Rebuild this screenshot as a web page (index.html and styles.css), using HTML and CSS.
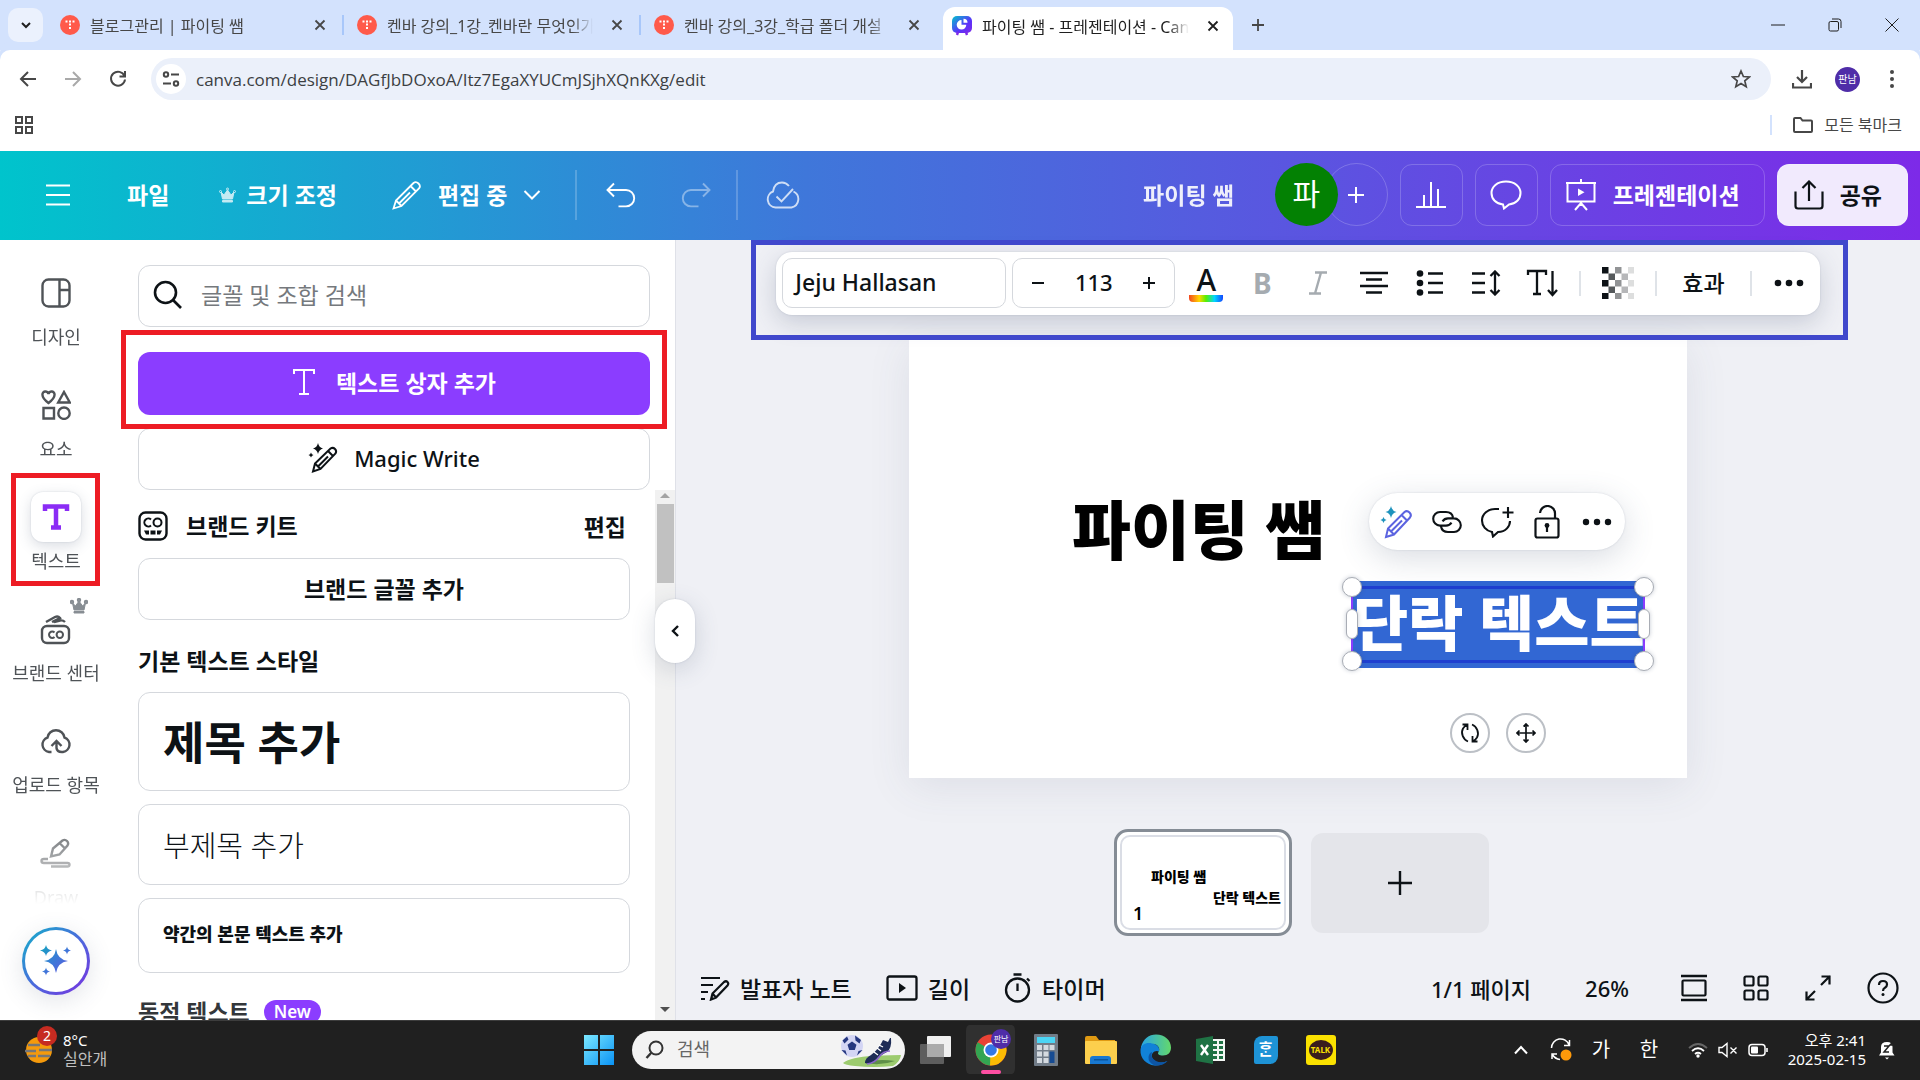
FILE: index.html
```html
<!DOCTYPE html>
<html lang="ko">
<head>
    <meta charset="UTF-8">
    <meta name="viewport" content="width=device-width, initial-scale=1.0">
    <title>파이팅 쌤 - 프레젠테이션 - Canva</title>
    <link rel="stylesheet" href="styles.css">
</head>
<body>
    <!-- Browser tabs -->
    <div class="tab-strip">
        <button class="tab-search" aria-label="탭 검색">
            <svg width="12" height="12" viewBox="0 0 12 12"><path d="M2 4l4 4 4-4" stroke-width="2"/></svg>
        </button>
        <div class="tab">
            <svg class="favicon" viewBox="0 0 20 20"><circle cx="10" cy="10" r="10" fill="#ff5a4a" stroke="none"/><path d="M5.500 6.500h2M9 6.500h2M12.500 6.500h2M9 9.500h2M9 13h2" stroke="#fff" stroke-width="1.800"/></svg>
            <span class="tab-title">블로그관리 | 파이팅 쌤</span>
            <button class="tab-close" aria-label="닫기"><svg width="12" height="12" viewBox="0 0 12 12"><path d="M1.500 1.500l9 9M10.500 1.500l-9 9" stroke-width="1.800"/></svg></button>
        </div>
        <div class="tab">
            <svg class="favicon" viewBox="0 0 20 20"><circle cx="10" cy="10" r="10" fill="#ff5a4a" stroke="none"/><path d="M5.500 6.500h2M9 6.500h2M12.500 6.500h2M9 9.500h2M9 13h2" stroke="#fff" stroke-width="1.800"/></svg>
            <span class="tab-title">켄바 강의_1강_켄바란 무엇인가</span>
            <button class="tab-close" aria-label="닫기"><svg width="12" height="12" viewBox="0 0 12 12"><path d="M1.500 1.500l9 9M10.500 1.500l-9 9" stroke-width="1.800"/></svg></button>
        </div>
        <div class="tab last">
            <svg class="favicon" viewBox="0 0 20 20"><circle cx="10" cy="10" r="10" fill="#ff5a4a" stroke="none"/><path d="M5.500 6.500h2M9 6.500h2M12.500 6.500h2M9 9.500h2M9 13h2" stroke="#fff" stroke-width="1.800"/></svg>
            <span class="tab-title">켄바 강의_3강_학급 폴더 개설</span>
            <button class="tab-close" aria-label="닫기"><svg width="12" height="12" viewBox="0 0 12 12"><path d="M1.500 1.500l9 9M10.500 1.500l-9 9" stroke-width="1.800"/></svg></button>
        </div>
        <div class="tab active">
            <svg class="favicon" viewBox="0 0 20 20">
                <defs><linearGradient id="fav" x1="0" y1="0" x2="1" y2="1"><stop offset="0" stop-color="#00c4cc"/><stop offset=".6" stop-color="#5a32fa"/><stop offset="1" stop-color="#7d2ae8"/></linearGradient></defs>
                <rect width="20" height="17" rx="5" fill="url(#fav)" stroke="none"/><path d="M6 16l-1 3M14 16l1 3" stroke="#7d2ae8" stroke-width="2.400"/>
                <path d="M9.500 4a4.800 4.800 0 1 0 4.800 4.800H9.500z" fill="#fff" stroke="none"/><path d="M11.500 2.800v4h4a4 4 0 0 0-4-4z" fill="#fff" stroke="none"/>
            </svg>
            <span class="tab-title">파이팅 쌤 - 프레젠테이션 - Canva</span>
            <button class="tab-close" aria-label="닫기"><svg width="12" height="12" viewBox="0 0 12 12"><path d="M1.500 1.500l9 9M10.500 1.500l-9 9" stroke-width="1.800"/></svg></button>
        </div>
        <button class="new-tab" aria-label="새 탭"><svg width="14" height="14" viewBox="0 0 14 14"><path d="M7 1v12M1 7h12" stroke-width="1.800"/></svg></button>
        <div class="window-controls">
            <button aria-label="최소화"><svg width="14" height="14" viewBox="0 0 14 14"><path d="M0 7h14"/></svg></button>
            <button aria-label="복원"><svg width="14" height="14" viewBox="0 0 14 14"><rect x="1" y="3.500" width="9.500" height="9.500" rx="1.500"/><path d="M4 1h6.500a2.500 2.500 0 0 1 2.500 2.500V10"/></svg></button>
            <button aria-label="닫기"><svg width="14" height="14" viewBox="0 0 14 14"><path d="M.5.500l13 13M13.500.500l-13 13"/></svg></button>
        </div>
    </div>

    <!-- Address bar -->
    <div class="browser-bar">
        <button aria-label="뒤로"><svg width="18" height="18" viewBox="0 0 18 18"><path d="M17 9H2M9 2L2 9l7 7" stroke-width="2"/></svg></button>
        <button class="dim" aria-label="앞으로"><svg width="18" height="18" viewBox="0 0 18 18"><path d="M1 9h15M9 2l7 7-7 7" stroke-width="2"/></svg></button>
        <button aria-label="새로고침"><svg width="18" height="18" viewBox="0 0 18 18"><path d="M15.500 6A7 7 0 1 0 16 9.500M16 1v5.500h-5.500" stroke-width="2"/></svg></button>
        <div class="omnibox">
            <span class="site-info"><svg width="18" height="18" viewBox="0 0 18 18"><path d="M9 4.500h8M1 13.500h8" stroke-width="2"/><circle cx="4" cy="4.500" r="2.200" stroke-width="2"/><circle cx="14" cy="13.500" r="2.200" stroke-width="2"/></svg></span>
            <input type="text" aria-label="주소" value="canva.com/design/DAGfJbDOxoA/Itz7EgaXYUCmJSjhXQnKXg/edit">
            <svg width="20" height="20" viewBox="0 0 20 20"><path d="M10 2l2.400 5.500 6 .5-4.600 3.900 1.400 5.900L10 14.600l-5.200 3.200 1.400-5.900L1.600 8l6-.5z" stroke-width="1.700"/></svg>
        </div>
        <button aria-label="다운로드"><svg width="20" height="20" viewBox="0 0 20 20"><path d="M10 1v11M5 8l5 5 5-5M1 14v4.500h18V14" stroke-width="2.200"/></svg></button>
        <span class="profile">판남</span>
        <button aria-label="메뉴"><svg width="6" height="20" viewBox="0 0 6 20"><g fill="currentColor" stroke="none"><circle cx="3" cy="3" r="2"/><circle cx="3" cy="10" r="2"/><circle cx="3" cy="17" r="2"/></g></svg></button>
    </div>
    <div class="bookmarks">
        <button aria-label="앱"><svg width="18" height="18" viewBox="0 0 18 18"><path d="M1 1h6v6H1zM11 1h6v6h-6zM1 11h6v6H1zM11 11h6v6h-6z" stroke-width="2"/></svg></button>
        <a class="all-bookmarks" href="#"><svg width="22" height="18" viewBox="0 0 22 18"><path d="M3 2h5.500l2 2.500H19q1 0 1 1V15q0 1-1 1H3q-1 0-1-1V3q0-1 1-1z" stroke-width="2"/></svg>모든 북마크</a>
    </div>

    <!-- Editor header -->
    <header class="app-header">
        <div class="header-left">
            <button class="menu-btn" aria-label="메뉴"><svg width="26" height="22" viewBox="0 0 26 22"><path d="M1 1.500h24M1 11h24M1 20.500h24" stroke-width="2"/></svg></button>
            <button>파일</button>
            <button><svg class="crown" width="17" height="16" viewBox="0 0 17 16"><path d="M2 5l3 3 3.500-5L12 8l3-3-1.500 7h-10zM3.500 13.500h10v1.500h-10z" fill="currentColor"/><circle cx="1.500" cy="4.500" r="1" /><circle cx="8.500" cy="2" r="1"/><circle cx="15.500" cy="4.500" r="1"/></svg>크기 조정</button>
            <button class="edit-mode"><svg width="30" height="30" viewBox="0 0 30 30"><path d="M1.500 28.500L4 20.500 21.500 3q2.500-2 5 .5t.5 5L9.500 26zM4 20.500l5.500 5.500M18.500 6l5.500 5.500M7 23.500L18 12.500" stroke-width="1.800"/></svg>편집 중<svg width="18" height="12" viewBox="0 0 18 12"><path d="M1.500 2L9 9.500 16.500 2" stroke-width="2"/></svg></button>
            <span class="header-line"></span>
            <button aria-label="실행 취소"><svg width="30" height="26" viewBox="0 0 30 26"><path d="M8 1.500L1.500 8 8 14.500M1.500 8H20a8.200 8.200 0 0 1 0 16.400h-7.500" stroke-width="1.900"/></svg></button>
            <button class="faded" aria-label="다시 실행"><svg width="30" height="26" viewBox="0 0 30 26"><path d="M22 1.500L28.500 8 22 14.500M28.500 8H10a8.200 8.200 0 0 0 0 16.400h7.500" stroke-width="1.900"/></svg></button>
            <span class="header-line"></span>
            <svg class="saved" width="34" height="28" viewBox="0 0 34 28"><path d="M27.500 10.500a8.500 8.500 0 0 1-2 16h-16a8.300 8.300 0 0 1-2.500-16C8 4 12 1.500 16 1.500q4 0 7 3.500M10.500 15.500l5 5L27 8" stroke-width="1.900"/></svg>
        </div>
        <div class="header-right">
            <span class="doc-title">파이팅 쌤</span>
            <div class="members">
                <span class="avatar">파</span>
                <button class="add-member" aria-label="멤버 추가"><svg width="18" height="18" viewBox="0 0 18 18"><path d="M9 1v16M1 9h16" stroke-width="2"/></svg></button>
            </div>
            <button class="outlined square" aria-label="통계"><svg width="32" height="28" viewBox="0 0 32 28"><path d="M1 26h30M9 26V14M16 26V1M23 26V8" stroke-width="2"/></svg></button>
            <button class="outlined square" aria-label="댓글"><svg width="32" height="30" viewBox="0 0 32 30"><path d="M13 24.500C6 24 1.500 19 1.500 13S7 1.500 16 1.500 30.500 7 30.500 13 26 24 19 24.500L14 28.500z" stroke-width="2"/></svg></button>
            <button class="outlined"><svg width="32" height="32" viewBox="0 0 32 32"><path d="M1 4h30M2.500 4v18.500h27V4M16 0v4M16 22.500V27M10 31l6-7 6 7" stroke-width="2"/><path d="M13 9.500v7.500l6.500-3.800z" fill="currentColor" stroke="none"/></svg>프레젠테이션</button>
            <button class="share"><svg width="30" height="30" viewBox="0 0 30 30"><path d="M1.500 11.500v14.500q0 2.500 2.500 2.500h22q2.500 0 2.500-2.500V11.500M15 21V2M8.500 8L15 1.500 21.500 8" stroke-width="2.200"/></svg>공유</button>
        </div>
    </header>

    <main class="workspace">
        <!-- Side rail -->
        <nav class="rail">
            <div class="rail-list">
                <a class="rail-item" href="#"><span class="tile"><svg width="30" height="30" viewBox="0 0 30 30"><rect x="1.500" y="1.500" width="27" height="27" rx="6"/><path d="M18.500 1.500v27M18.500 12h10"/></svg></span>디자인</a>
                <a class="rail-item" href="#"><span class="tile"><svg width="30" height="30" viewBox="0 0 30 30"><path d="M7.500 13C3 9.500 1.500 7.500 1.500 5a3 3 0 0 1 6-1 3 3 0 0 1 6 1c0 2.500-1.500 4.500-6 8zM23 2l5.800 10.500H17.200zM2.500 18h10.500v10.500H2.500z"/><circle cx="23" cy="23.200" r="5.700"/></svg></span>요소</a>
                <a class="rail-item current" href="#"><span class="tile"><svg width="28" height="28" viewBox="0 0 28 28"><path d="M3 8V3.500h22V8M14 3.500V24M9 24.500h10" stroke-width="4.500"/></svg></span>텍스트</a>
                <a class="rail-item" href="#"><span class="tile"><svg width="32" height="32" viewBox="0 0 32 32"><rect x="2" y="13" width="27" height="17" rx="5"/><path d="M6 9l9-5q3-1.500 5 1l-8 4M14 9l6-1.500q3-.5 5 1.500"/><path d="M14.500 19.500a3.200 3.200 0 1 0 0 4.500" stroke-width="2"/><circle cx="19.800" cy="21.700" r="3.200" stroke-width="2"/></svg><svg class="rail-crown" width="18" height="16" viewBox="0 0 17 16"><path d="M2 5l3 3 3.500-5L12 8l3-3-1.500 7h-10zM3.500 13.500h10v1.500h-10z" fill="currentColor" stroke-width="1"/><circle cx="1.500" cy="4" r="1"/><circle cx="8.500" cy="2" r="1"/><circle cx="15.500" cy="4" r="1"/></svg></span>브랜드 센터</a>
                <a class="rail-item" href="#"><span class="tile"><svg width="32" height="28" viewBox="0 0 32 28"><path d="M11.500 25H9A7.500 7.500 0 0 1 7.500 10.500a8.600 8.600 0 0 1 17 0A7.500 7.500 0 0 1 23 25q-6 .5-6.500-4v-7M11.500 19l5-5 5 5"/></svg></span>업로드 항목</a>
                <a class="rail-item" href="#"><span class="tile"><svg width="32" height="30" viewBox="0 0 32 30"><path d="M11 18.500l2-8 9.500-8q2.500-1.500 4.500.5t.5 4.500L19.500 16.500zM19.500 5l5 5M8 21H4q-2.500 0-2.500 2t2.500 2h23.500q2 0 2 1.800T27.500 28.500H11"/></svg></span>Draw</a>
            </div>
            <button class="magic" aria-label="매직 스튜디오">
                <svg width="34" height="34" viewBox="0 0 34 34">
                    <defs><linearGradient id="mg" x1="0" y1="0" x2="1" y2="1"><stop offset="0" stop-color="#12a5bf"/><stop offset=".5" stop-color="#3d78d8"/><stop offset="1" stop-color="#6b4ee0"/></linearGradient></defs>
                    <path d="M17 5q1.500 10.500 12 12-10.500 1.500-12 12-1.500-10.500-12-12 10.500-1.500 12-12zM7 1q.8 4.500 6 5.500-5.200 1-6 5.500-.8-4.500-6-5.500 5.200-1 6-5.500zM28 2.500q.5 3.500 4 4-3.500.5-4 4-.5-3.500-4-4 3.500-.5 4-4zM7 23.500q.5 3.500 4 4-3.500.5-4 4-.5-3.500-4-4 3.500-.5 4-4z" fill="url(#mg)" stroke="none"/>
                </svg>
            </button>
        </nav>

        <!-- Text panel -->
        <section class="panel">
            <div class="panel-top">
                <label class="search-box">
                    <svg width="30" height="30" viewBox="0 0 30 30"><circle cx="12.500" cy="12.500" r="10.500" stroke-width="2.600"/><path d="M20 20l8 8" stroke-width="2.600"/></svg>
                    <input type="search" placeholder="글꼴 및 조합 검색" aria-label="글꼴 및 조합 검색">
                </label>
                <button class="add-text"><svg width="24" height="28" viewBox="0 0 24 28"><path d="M2 6V2h20v4M12 2v24M7 26h10" stroke-width="2"/></svg>텍스트 상자 추가</button>
                <button class="box-btn magic-write"><svg width="32" height="32" viewBox="0 0 32 32"><path d="M5 29.500l2-8 15.500-15q2.500-1.500 4.500.5t.5 4.500L12.500 27zM7 21.500l5.500 5.500M20 9l5.500 5.500M10 24.500l10-10" stroke-width="2"/><path d="M10 1q1 4.500 5 5.500-4 1-5 5.500-1-4.500-5-5.500 4-1 5-5.500zM3 10.500q.5 2 2.500 2.500-2 .5-2.500 2.500Q2.500 13.500.5 13q2-.5 2.500-2.500z" fill="currentColor" stroke="none"/></svg>Magic Write</button>
            </div>
            <div class="panel-scroll">
                <div class="panel-content">
                    <div class="brand-row">
                        <svg width="30" height="30" viewBox="0 0 30 30"><rect x="1.500" y="1.500" width="27" height="27" rx="6" stroke-width="2.400"/><path d="M13 8.500a4 4 0 1 0 0 6" stroke-width="2"/><circle cx="19.500" cy="11.500" r="4" stroke-width="2"/><path d="M6 19.500h5v4H8zM12.500 19.500h5v4h-5zM19 19.500h5l-2 4h-3z" fill="currentColor" stroke="none"/></svg>
                        <h2>브랜드 키트</h2>
                        <a href="#">편집</a>
                    </div>
                    <button class="box-btn brand-font">브랜드 글꼴 추가</button>
                    <h2 class="style-title">기본 텍스트 스타일</h2>
                    <button class="style-card heading">제목 추가</button>
                    <button class="style-card subheading">부제목 추가</button>
                    <button class="style-card body-text">약간의 본문 텍스트 추가</button>
                    <h2 class="dynamic">동적 텍스트 <span class="new">New</span></h2>
                </div>
                <div class="scrollbar"><span class="arrow-up"></span><span class="thumb"></span><span class="arrow-down"></span></div>
            </div>
            <button class="collapse" aria-label="패널 닫기"><svg width="10" height="14" viewBox="0 0 10 14"><path d="M8 2L3 7l5 5" stroke-width="2.400"/></svg></button>
        </section>

        <!-- Canvas -->
        <section class="editor">
            <div class="toolbar">
                <button class="font-name">Jeju Hallasan</button>
                <div class="font-size">
                    <button aria-label="작게"><svg width="14" height="14" viewBox="0 0 14 14"><path d="M1 7h12" stroke-width="2"/></svg></button>
                    <input type="text" value="113" aria-label="글꼴 크기">
                    <button aria-label="크게"><svg width="14" height="14" viewBox="0 0 14 14"><path d="M7 1v12M1 7h12" stroke-width="2"/></svg></button>
                </div>
                <button class="tool" aria-label="색상"><span class="color-a">A</span></button>
                <button class="tool off" aria-label="굵게"><b>B</b></button>
                <button class="tool off" aria-label="기울임"><svg width="20" height="24" viewBox="0 0 20 24"><path d="M7 1.500h12M1 22.500h12M13 1.500L7 22.500" stroke-width="2.400"/></svg></button>
                <button class="tool" aria-label="정렬"><svg width="30" height="24" viewBox="0 0 30 24"><path d="M1 2h28M7 8.500h16M1 15h28M7 21.500h16" stroke-width="2.400"/></svg></button>
                <button class="tool" aria-label="목록"><svg width="28" height="26" viewBox="0 0 28 26"><path d="M12 3.500h15M12 13h15M12 22.500h15" stroke-width="2.400"/><g fill="currentColor" stroke="none"><circle cx="4" cy="3.500" r="3.300"/><circle cx="4" cy="13" r="3.300"/><circle cx="4" cy="22.500" r="3.300"/></g></svg></button>
                <button class="tool" aria-label="간격"><svg width="30" height="26" viewBox="0 0 30 26"><path d="M1 3.500h13M1 13h13M1 22.500h13M24 1.500v23M19.500 6L24 1.500 28.500 6M19.500 20l4.500 4.500 4.500-4.500" stroke-width="2.300"/></svg></button>
                <button class="tool" aria-label="세로 텍스트"><svg width="32" height="28" viewBox="0 0 32 28"><path d="M2 6V2h18v4M11 2v23M7 25h8M26.500 2v23.500M22 21l4.500 5 4.500-5" stroke-width="2.300"/></svg></button>
                <span class="tool-line"></span>
                <button class="tool" aria-label="투명도"><svg width="32" height="32" viewBox="0 0 32 32"><g fill="#0d1216" stroke="none"><path d="M0 0h6.500v6.500H0zM0 13h6.500v6.500H0zM0 26h6.500v6H0z"/><path d="M6.500 6.500H13V13H6.500zM6.500 19.500H13V26H6.500z" opacity=".7"/><path d="M13 0h6.500v6.500H13zM13 13h6.500v6.500H13zM13 26h6.500v6H13z" opacity=".45"/><path d="M19.500 6.500H26V13h-6.500zM19.500 19.500H26V26h-6.500z" opacity=".3"/><path d="M26 0h6v6.500h-6zM26 13h6v6.500h-6zM26 26h6v6h-6z" opacity=".14"/></g></svg></button>
                <span class="tool-line"></span>
                <button class="effects">효과</button>
                <span class="tool-line"></span>
                <button class="tool" aria-label="더 보기"><svg width="30" height="8" viewBox="0 0 30 8"><g fill="currentColor" stroke="none"><circle cx="4" cy="4" r="3.300"/><circle cx="15" cy="4" r="3.300"/><circle cx="26" cy="4" r="3.300"/></g></svg></button>
            </div>

            <div class="slide">
                <div class="slide-text title-text">파이팅 쌤</div>
                <div class="slide-text selected-text">단락 텍스트
                    <i class="knob tl"></i><i class="knob tr"></i><i class="knob bl"></i><i class="knob br"></i>
                    <i class="grip left"></i><i class="grip right"></i>
                </div>
                <div class="context-bar">
                    <button aria-label="매직"><svg width="34" height="34" viewBox="0 0 34 34"><path d="M6 32l2-8.500L24.500 7q2.500-2 5 .5t.5 5L14 29.500zM8 23.500l6 6M21.500 10l6 6M11 26.500l11-11" stroke="#5b63e0" stroke-width="2"/><path d="M11 1q1 5 5.500 6-4.500 1-5.500 6-1-5-5.500-6 4.500-1 5.500-6zM3.500 12q.5 2.500 3 3-2.500.5-3 3Q3 15.500.5 15q2.500-.5 3-3z" fill="#1e93bd" stroke="none"/></svg></button>
                    <button aria-label="링크"><svg width="32" height="24" viewBox="0 0 32 24"><path d="M22 7.500Q21 2 15 2H9A6.800 6.800 0 0 0 9 15.600h6q3.500 0 5.500-3M10 16.500Q11 22 17 22h6a6.800 6.800 0 0 0 0-13.600h-6q-3.500 0-5.500 3" stroke-width="2.100"/></svg></button>
                    <button aria-label="댓글"><svg width="34" height="32" viewBox="0 0 34 32"><path d="M19 3h-4C8 3 2 8 2 14.500 2 20 6 25 12 26l1 4.500 5-4.500c8 0 12-6 12-11M28 1v11M22.500 6.500h11" stroke-width="2.100"/></svg></button>
                    <button aria-label="잠금"><svg width="26" height="34" viewBox="0 0 26 34"><rect x="1.500" y="13.500" width="23" height="19" rx="2" stroke-width="2.200"/><path d="M6 8a7.500 7.500 0 0 1 15 1v4.500M13 22v5" stroke-width="2.200"/><circle cx="13" cy="20.500" r="2.400" fill="currentColor" stroke="none"/></svg></button>
                    <button aria-label="더 보기"><svg width="30" height="8" viewBox="0 0 30 8"><g fill="currentColor" stroke="none"><circle cx="4" cy="4" r="3.200"/><circle cx="15" cy="4" r="3.200"/><circle cx="26" cy="4" r="3.200"/></g></svg></button>
                </div>
                <div class="transform-btns">
                    <button aria-label="회전"><svg width="20" height="20" viewBox="0 0 20 20"><path d="M8 18.500C3 16.500.5 10 3 5.500Q4.500 3 7 2M2.500 1.500H7.500V7M12 1.500C17 3.500 19.500 10 17 14.500q-1.500 2.500-4 3.500M17.500 18.500H12.500V13" stroke-width="1.800"/></svg></button>
                    <button aria-label="이동"><svg width="20" height="20" viewBox="0 0 20 20"><path d="M10 1v18M1 10h18M7.500 3.500L10 1l2.500 2.500M7.500 16.500L10 19l2.500-2.500M3.500 7.500L1 10l2.500 2.500M16.500 7.500L19 10l-2.500 2.500" stroke-width="1.700"/></svg></button>
                </div>
            </div>

            <div class="pages">
                <button class="page-thumb">
                    <span class="mini first">파이팅 쌤</span>
                    <span class="mini second">단락 텍스트</span>
                    <span class="page-no">1</span>
                </button>
                <button class="add-page" aria-label="페이지 추가"><svg width="24" height="24" viewBox="0 0 24 24"><path d="M12 0v24M0 12h24" stroke-width="2.400"/></svg></button>
            </div>

            <footer class="editor-footer">
                <button><svg width="30" height="26" viewBox="0 0 30 26"><path d="M1 3h19M1 10h12M1 17h7M1 24h4M11 24.500l1.500-6L24 7q2-1.500 3.500 0t0 3.500L16 22.500zM12.500 18.500l3.500 4" stroke-width="2.200"/></svg>발표자 노트</button>
                <button><svg width="32" height="26" viewBox="0 0 32 26"><rect x="1.500" y="1.500" width="29" height="23" rx="2" stroke-width="2.300"/><path d="M13 8v10l7-5z" fill="currentColor" stroke="none"/></svg>길이</button>
                <button><svg width="28" height="30" viewBox="0 0 28 30"><circle cx="13.500" cy="17" r="11.500" stroke-width="2.300"/><path d="M9.500 1.500h8M13.500 10.500V18M23 5.500l2.500 2.500" stroke-width="2.300"/></svg>타이머</button>
                <div class="footer-right">
                    <button class="page-count">1/1 페이지</button>
                    <button class="zoom-level">26%</button>
                    <button aria-label="보기"><svg width="26" height="28" viewBox="0 0 26 28"><path d="M0 2h26M0 26h26" stroke-width="2.400"/><rect x="1.500" y="6.500" width="23" height="15" rx="1" stroke-width="2.200"/></svg></button>
                    <button aria-label="격자"><svg width="26" height="26" viewBox="0 0 26 26"><g stroke-width="2.200"><rect x="1.500" y="1.500" width="9" height="9" rx="1.500"/><rect x="15.500" y="1.500" width="9" height="9" rx="1.500"/><rect x="1.500" y="15.500" width="9" height="9" rx="1.500"/><rect x="15.500" y="15.500" width="9" height="9" rx="1.500"/></g></svg></button>
                    <button aria-label="전체 화면"><svg width="26" height="26" viewBox="0 0 26 26"><path d="M16 10l9-9M16.500 1.500h8v8M10 16l-9 9M1.500 16.500v8h8" stroke-width="2.200"/></svg></button>
                    <button aria-label="도움말"><svg width="32" height="32" viewBox="0 0 32 32"><circle cx="16" cy="16" r="14.500" stroke-width="2.200"/><path d="M12 13q0-4 4-4t4 3.500q0 2-2 3.200-2 1.300-2 3.300" stroke-width="2.200"/><circle cx="16" cy="22.500" r="1.500" fill="currentColor" stroke="none"/></svg></button>
                </div>
            </footer>
        </section>
    </main>

    <!-- Windows taskbar -->
    <div class="taskbar">
        <div class="weather">
            <span class="weather-icon">
                <svg width="30" height="30" viewBox="0 0 30 30"><circle cx="15" cy="15" r="13" fill="#f59a0c" stroke="none"/><path d="M4 10h12M1 16h11M15 15h13M4 21h8M14 21h12" stroke="#777" stroke-width="2.600"/></svg>
                <span class="badge">2</span>
            </span>
            <div><div>8°C</div><div class="muted">실안개</div></div>
        </div>
        <div class="task-center">
            <button aria-label="시작"><svg width="30" height="30" viewBox="0 0 30 30"><defs><linearGradient id="win" x1="0" y1="0" x2="1" y2="1"><stop offset="0" stop-color="#7be8ff"/><stop offset="1" stop-color="#0a93f5"/></linearGradient></defs><path d="M0 0h14v14H0zM16 0h14v14H16zM0 16h14v14H0zM16 16h14v14H16z" fill="url(#win)" stroke="none"/></svg></button>
            <label class="task-search">
                <svg width="20" height="20" viewBox="0 0 20 20"><circle cx="11" cy="8" r="6.500" stroke-width="2"/><path d="M6.500 12.500L1.500 18" stroke-width="2.400"/></svg>
                <input type="search" placeholder="검색" aria-label="검색">
                <svg width="64" height="34" viewBox="0 0 64 34">
                    <g stroke="none">
                        <path d="M4 30q8-6 30-7 20-1 28-1-1 7-8 11-20 2-38 0-10-1-12-3z" fill="#9ccb6e"/>
                        <path d="M26 30q12-5 30-2-14 5-30 2z" fill="#5f8f48"/>
                        <circle cx="13" cy="13" r="11" fill="#d3d5f4"/>
                        <path d="M13 8.500l4.500 3.200-1.700 5.300h-5.600l-1.700-5.300zM3.500 7.500L8 3.500l1.500 3-4 4zM16 2.500l6 4.500-1.500 3.500-4-3zM2.500 17l4 .5 1.500 5zM18 22.500l1.500-4.500 4-1z" fill="#25377f"/>
                        <path d="M44 7l5 2 2-4 1 0q1 10-4 14-7 3-11 9-5 4-11 2 0-5 6-8 8-6 12-15z" fill="#1e2c56"/>
                    </g>
                    <path d="M28 31q8-1 12-7t11-6" stroke="#8a68c8" stroke-width="1.600"/>
                    <path d="M38 15l4 3M35 19l4 3M40 12l4 2" stroke="#fff" stroke-width="1.300"/>
                </svg>
            </label>
            <button class="app" aria-label="작업 보기"><svg width="32" height="30" viewBox="0 0 32 30"><g stroke="none"><rect x="7" y="1" width="24" height="21" rx="1" fill="#f0f0f0"/><rect x="0" y="9" width="24" height="20" rx="1" fill="#6a6a6a" opacity=".85"/><path d="M7 9h17v13H7z" fill="#ababab"/></g></svg></button>
            <button class="app running" aria-label="Chrome"><svg width="32" height="32" viewBox="0 0 32 32"><g stroke="none"><circle cx="16" cy="16" r="15.500" fill="#e94235"/><path d="M16 16L2.600 8.300A15.500 15.500 0 0 0 15 31.500l7-12z" fill="#33a552"/><path d="M16 16h-.5L15 31.500A15.500 15.500 0 0 0 29.500 8.500H16z" fill="#fbbc04"/><circle cx="16" cy="16" r="7.500" fill="#fff"/><circle cx="16" cy="16" r="5.800" fill="#3478e5"/></g></svg><span class="chrome-user">판남</span></button>
            <button class="app" aria-label="계산기"><svg width="24" height="32" viewBox="0 0 24 32"><g stroke="none"><rect width="24" height="32" rx="1" fill="#717c88"/><rect x="3" y="3" width="18" height="6" fill="#4bd5f5"/><path d="M3 11h5v5H3zM9.500 11h5v5h-5zM15.500 11h5v5h-5zM3 17.500h5v5H3zM9.500 17.500h5v5h-5zM3 24h5v5H3zM9.500 24h5v5h-5z" fill="#d4dae0"/><path d="M15.500 17.500h5V29h-5z" fill="#164b92"/></g></svg></button>
            <button class="app" aria-label="파일 탐색기"><svg width="32" height="28" viewBox="0 0 32 28"><g stroke="none"><path d="M0 2q0-2 2-2h9l3 4h16v10H0z" fill="#e09a13"/><rect y="5" width="32" height="23" rx="1" fill="#fccf4d"/><path d="M5 28v-5q0-3 3-3h15q3 0 3 3v5z" fill="#1878d1"/><path d="M9 23h14v1.500H9z" fill="#0b559c"/></g></svg></button>
            <button class="app" aria-label="Edge"><svg width="32" height="32" viewBox="0 0 32 32"><defs><linearGradient id="edge" x1="0" y1="0" x2="1" y2="0"><stop offset="0" stop-color="#28a5e5"/><stop offset="1" stop-color="#64d86b"/></linearGradient></defs><g stroke="none"><path d="M1 13C3 5 9 .500 16 .500c9 0 15 6 15 13 0 5-3 8-8 8-4 0-6-1.500-4.500-3.500 2-3 0-8-6-8C7 10 3 12 1 16z" fill="url(#edge)"/><path d="M.5 16C1 10 7 8 12 9.500c5 .5 8 4 7 8-4-2-9 2-6.500 7 2 4.500 9 5.500 15 2.500C24 30 19 32 14.500 31.500 6 30.500 0 24 .5 16z" fill="#1182d8"/><path d="M12 18q-2 6 4 9 5 2.500 11.500 0Q23 32 15 31.500 8 29 8.500 23q.5-4 3.500-5z" fill="#0d55a4"/></g></svg></button>
            <button class="app" aria-label="Excel"><svg width="30" height="28" viewBox="0 0 30 28"><g stroke="none"><rect x="12" y="3" width="17" height="22" fill="#f4f8f5"/><path d="M17 5h4v3h-4zM23 5h4v3h-4zM17 10h4v3h-4zM23 10h4v3h-4zM17 15h4v3h-4zM23 15h4v3h-4zM17 20h4v3h-4zM23 20h4v3h-4z" fill="#1f7244"/><path d="M0 3l17-3v28L0 25z" fill="#1f7244"/></g><path d="M5 9l7 10M12 9L5 19" stroke="#fff" stroke-width="2.400"/></svg></button>
            <button class="app" aria-label="한글"><span class="hwp">ᄒᆞᆫ</span></button>
            <button class="app" aria-label="카카오톡"><span class="kakao"><span>TALK</span></span></button>
        </div>
        <div class="tray">
            <button aria-label="숨겨진 아이콘"><svg width="14" height="10" viewBox="0 0 14 10"><path d="M1 8.500l6-6.500 6 6.500" stroke-width="2"/></svg></button>
            <button class="update" aria-label="업데이트"><svg width="22" height="24" viewBox="0 0 22 24"><path d="M1.500 10A9 9 0 0 1 19 7M19.500 2v5.500H14M2 21v-5h5M2 16q3 5 8 5.500" stroke-width="1.500"/><circle cx="16" cy="17" r="5.500" fill="#ff9a0a" stroke="none"/></svg></button>
            <span class="ime">가</span>
            <span class="ime">한</span>
            <div class="status">
                <svg width="20" height="16" viewBox="0 0 20 16"><path d="M1 6q9-8 18 0" stroke="#666" stroke-width="1.800"/><path d="M4 9q6-5.500 12 0M7 12q3-2.500 6 0" stroke-width="1.800"/><circle cx="10" cy="14" r="1.700" fill="currentColor" stroke="none"/></svg>
                <svg width="20" height="16" viewBox="0 0 20 16"><path d="M1 5.500h3l5-4v13l-5-4H1zM12.500 5.500l6 6M18.500 5.500l-6 6" stroke-width="1.400"/></svg>
                <svg width="20" height="16" viewBox="0 0 20 16"><rect x="1" y="2.500" width="16" height="11" rx="3" stroke-width="1.500"/><path d="M19 6v4" stroke-width="1.600"/><rect x="3" y="4.500" width="7" height="7" rx="1" fill="currentColor" stroke="none"/></svg>
            </div>
            <div class="clock"><div>오후 2:41</div><div>2025-02-15</div></div>
            <svg width="18" height="20" viewBox="0 0 18 20"><path d="M1 15.500l2-3V7q0-5 6-5 5.500 0 5.500 5v5.500l2 3zM7 17.500h4L9 19.500z" fill="currentColor" stroke="none"/><path d="M6 6h5l-5 6h5M12 1h4l-4 4h4" stroke="#202020" stroke-width="1.500"/></svg>
        </div>
    </div>
</body>
</html>
```
FILE: styles.css
```css
* {
    margin: 0;
    padding: 0;
    box-sizing: border-box;
}

body {
    display: flex;
    flex-direction: column;
    height: 100vh;
    overflow: hidden;
    background: #fff;
    color: #0d1216;
    font-family: 'Noto Sans', 'Noto Sans CJK KR', sans-serif;
    font-size: 23px;
}

button,
input {
    font: inherit;
    color: inherit;
    background: none;
    border: none;
    outline: none;
}

button {
    display: inline-flex;
    align-items: center;
    justify-content: center;
    white-space: nowrap;
    flex-shrink: 0;
}

a {
    color: inherit;
    text-decoration: none;
}

svg {
    fill: none;
    stroke: currentColor;
    flex-shrink: 0;
}

/* Tabs */
.tab-strip {
    display: flex;
    align-items: center;
    height: 50px;
    background: #d3e2fd;
    font-size: 16px;
    color: #474747;
}

.tab-search {
    width: 35px;
    height: 34px;
    margin: 0 4px 0 8px;
    border-radius: 10px;
    background: #ebf1fd;
    color: #1f1f1f;
}

.tab {
    position: relative;
    display: flex;
    align-items: center;
    width: 297px;
    padding: 0 18px 0 13px;
}

.tab::after {
    content: '';
    position: absolute;
    right: 0;
    width: 2px;
    height: 20px;
    background: #a8c7fa;
}

.tab.last::after,
.tab.active::after {
    display: none;
}

.tab.active {
    height: 43px;
    width: 290px;
    margin-left: 5px;
    padding: 0 14px 6px 9px;
    align-self: flex-end;
    border-radius: 12px 12px 0 0;
    background: #fff;
    color: #1f1f1f;
}

.favicon {
    width: 20px;
    height: 20px;
    margin-right: 10px;
}

.tab-title {
    flex: 1;
    overflow: hidden;
    white-space: nowrap;
    margin-right: 18px;
    mask-image: linear-gradient(to right, #000 90%, transparent);
}

.new-tab {
    width: 50px;
    height: 34px;
}

.window-controls {
    display: flex;
    margin-left: auto;
    color: #1f1f1f;
}

.window-controls button {
    width: 57px;
    height: 50px;
}

/* Address bar */
.browser-bar {
    display: flex;
    align-items: center;
    height: 58px;
    padding: 0 25px 0 19px;
    gap: 27px;
    color: #474747;
    box-shadow: 0 -8px 0 #d3e2fd;
    border-radius: 10px 10px 0 0;
    background: #fff;
}

/* keeps the active tab above the strip-coloured shadow */
.tab.active {
    z-index: 1;
}

.browser-bar .dim {
    color: #a9a9a9;
}

.omnibox {
    flex: 1;
    display: flex;
    align-items: center;
    height: 42px;
    padding: 0 20px 0 5px;
    border-radius: 21px;
    background: #ebf0fa;
    margin: 0 -6px 0 -3px;
}

.omnibox input {
    flex: 1;
    font-family: 'Open Sans', 'Noto Sans', sans-serif;
    font-size: 17px;
    color: #3c3f43;
}

.site-info {
    display: flex;
    align-items: center;
    justify-content: center;
    width: 30px;
    height: 30px;
    margin-right: 10px;
    border-radius: 50%;
    background: #fff;
}

.profile {
    width: 25px;
    height: 25px;
    margin: 0 2px 0 -4px;
    border-radius: 50%;
    background: #4f2da8;
    color: #fff;
    font-size: 10px;
    line-height: 24px;
    text-align: center;
}

.bookmarks {
    display: flex;
    align-items: center;
    justify-content: space-between;
    height: 43px;
    padding: 0 18px 9px 15px;
    color: #474747;
    font-size: 16px;
}

.all-bookmarks {
    display: flex;
    align-items: center;
    gap: 10px;
    padding-left: 20px;
    border-left: 2px solid #d3e2fd;
    line-height: 20px;
}

/* Editor header */
.app-header {
    display: flex;
    justify-content: space-between;
    align-items: center;
    height: 89px;
    padding: 0 12px 2px 20px;
    background: linear-gradient(90deg, #00c4cc, #3f77da 42%, #7d2ae8);
    color: #fff;
    font-weight: 700;
    line-height: 28px;
}

.header-left,
.header-right {
    display: flex;
    align-items: center;
}

.header-left button {
    height: 50px;
    padding: 0 25px;
    gap: 10px;
}

.header-left .menu-btn {
    padding-right: 31px;
}

.header-left .edit-mode {
    gap: 16px;
    padding-left: 30px;
    padding-right: 34px;
}

.crown,
.saved {
    opacity: .75;
}

.header-left .faded {
    opacity: .4;
}

.header-line {
    width: 2px;
    height: 50px;
    margin-right: 4px;
    background: rgba(255, 255, 255, .2);
}

.header-left .header-line + button {
    padding-right: 20px;
}

.saved {
    margin-left: 24px;
}

.header-right {
    gap: 12px;
}

.doc-title {
    margin-right: 29px;
    opacity: .9;
}

.members {
    display: flex;
}

.avatar {
    z-index: 1;
    width: 63px;
    height: 63px;
    border-radius: 50%;
    background: #038103;
    font-size: 30px;
    font-weight: 400;
    line-height: 62px;
    text-align: center;
}

.add-member {
    width: 63px;
    height: 63px;
    margin-left: -13px;
    border: 1px solid rgba(255, 255, 255, .2);
    border-radius: 50%;
}

.outlined,
.share {
    height: 62px;
    padding: 0 24px 0 14px;
    gap: 16px;
    border: 1px solid rgba(255, 255, 255, .2);
    border-radius: 12px;
}

.outlined.square {
    width: 63px;
    padding: 0;
}

.share {
    padding: 0 25px 0 16px;
    background: #f1eafd;
    color: #0d1216;
}

/* Workspace */
.workspace {
    flex: 1;
    display: flex;
    min-height: 0;
}

.rail {
    display: flex;
    flex-direction: column;
    align-items: center;
    width: 112px;
    padding-bottom: 25px;
}

.rail-list {
    flex: 1;
    min-height: 0;
    width: 112px;
    padding-top: 28px;
    overflow: hidden;
    mask-image: linear-gradient(to top, transparent, #000 90px);
}

.rail-item {
    position: relative;
    display: flex;
    flex-direction: column;
    align-items: center;
    gap: 9px;
    height: 112px;
    font-size: 18px;
    line-height: 20px;
    color: #4f5357;
    white-space: nowrap;
}

.rail-item svg {
    stroke-width: 2.4;
}

.tile {
    position: relative;
    display: flex;
    align-items: center;
    justify-content: center;
    width: 50px;
    height: 50px;
    border-radius: 12px;
}

.current .tile {
    color: #8b2cf5;
    background: #fff;
    box-shadow: 0 4px 14px rgba(64, 79, 109, .2), 0 0 2px rgba(64, 79, 109, .2);
}

.current::after {
    content: '';
    position: absolute;
    inset: -19px 12px 18px 11px;
    border: 5px solid #ed1c24;
}

.rail-crown {
    position: absolute;
    top: -6px;
    right: -7px;
    color: #878d93;
}

.magic {
    width: 68px;
    height: 68px;
    margin-top: 23px;
    border: 3px solid transparent;
    border-radius: 50%;
    background: linear-gradient(#fff, #fff) padding-box, linear-gradient(135deg, #12b3c8, #4a6bdc 50%, #7a2fe0) border-box;
    box-shadow: 0 6px 24px rgba(64, 79, 109, .15);
}

/* Text panel */
.panel {
    position: relative;
    display: flex;
    flex-direction: column;
    width: 564px;
    border-right: 1px solid #dfe1e8;
    font-weight: 600;
}

.panel-top {
    position: relative;
    z-index: 1;
    display: flex;
    flex-direction: column;
    padding: 25px 25px 0 26px;
}

.search-box {
    display: flex;
    align-items: center;
    height: 62px;
    padding: 0 14px 2px;
    gap: 18px;
    border: 1px solid #d5d8dd;
    border-radius: 12px;
}

.search-box input {
    flex: 1;
    font-weight: 400;
}

.search-box input::placeholder {
    color: #75797d;
}

.add-text {
    position: relative;
    z-index: 1;
    height: 63px;
    margin-top: 25px;
    padding-bottom: 3px;
    gap: 20px;
    border-radius: 12px;
    background: #8b3dff;
    color: #fff;
}

.add-text::after {
    content: '';
    position: absolute;
    inset: -22px -17px -14px -17px;
    border: 5px solid #ed1c24;
}

.box-btn {
    width: 100%;
    height: 62px;
    padding-bottom: 3px;
    gap: 14px;
    border: 1px solid #d5d8dd;
    border-radius: 12px;
}

.magic-write {
    margin-top: 13px;
    font-size: 22px;
    font-weight: 500;
}

.panel-scroll {
    flex: 1;
    display: flex;
    min-height: 0;
    overflow: hidden;
}

.panel-content {
    flex: 1;
    padding: 20px 25px 0 26px;
}

.brand-row {
    display: flex;
    align-items: center;
    height: 32px;
    padding-right: 4px;
}

.brand-row svg {
    margin-right: 18px;
}

.brand-row a {
    margin-left: auto;
}

h2 {
    font-size: 23px;
    font-weight: 600;
    line-height: 32px;
}

.brand-font {
    margin-top: 16px;
}

.style-title {
    margin: 25px 0 15px;
}

.style-card {
    width: 100%;
    height: 81px;
    margin-bottom: 13px;
    padding: 0 24px 2px;
    justify-content: flex-start;
    border: 1px solid #d5d8dd;
    border-radius: 12px;
}

.heading {
    height: 99px;
    font-size: 45px;
    font-weight: 700;
}

.subheading {
    font-size: 29px;
    font-weight: 300;
}

.body-text {
    height: 75px;
    padding-bottom: 5px;
    font-size: 18px;
    font-weight: 900;
}

.dynamic {
    display: flex;
    align-items: center;
    gap: 14px;
    margin-top: 10px;
    color: #33373b;
}

.new {
    padding: 0 10px;
    border-radius: 12px;
    background: #8b3dff;
    color: #fff;
    font-size: 17px;
    line-height: 24px;
}

.scrollbar {
    display: flex;
    flex-direction: column;
    align-items: center;
    width: 20px;
    padding: 3px 0 8px;
    background: #f1f1f1;
}

.arrow-up,
.arrow-down {
    border: 5px solid transparent;
}

.arrow-up {
    border-top-width: 0;
    border-bottom-color: #a3a3a3;
}

.arrow-down {
    margin-top: auto;
    border-bottom-width: 0;
    border-top-color: #505050;
}

.thumb {
    width: 17px;
    height: 79px;
    margin-top: 6px;
    background: #c1c1c1;
}

.collapse {
    position: absolute;
    z-index: 2;
    top: 359px;
    right: -20px;
    width: 40px;
    height: 64px;
    border-radius: 20px;
    background: #fff;
    box-shadow: 0 6px 24px rgba(64, 79, 109, .2), 0 0 2px rgba(64, 79, 109, .2);
}

/* Canvas */
.editor {
    flex: 1;
    display: flex;
    flex-direction: column;
    align-items: center;
    padding-top: 12px;
    background: #eff0f5;
}

.toolbar {
    position: relative;
    z-index: 2;
    display: flex;
    align-items: center;
    height: 63px;
    padding: 0 3px 1px 6px;
    border-radius: 16px;
    background: #fff;
    box-shadow: 0 8px 24px rgba(64, 79, 109, .22), 0 0 2px rgba(64, 79, 109, .2);
    font-size: 22px;
    font-weight: 500;
}

.toolbar::after {
    content: '';
    position: absolute;
    inset: -12px -28px -25px -25px;
    border: 5px solid #4048cc;
    pointer-events: none;
}

.font-name,
.font-size {
    height: 50px;
    border: 1px solid #d5d8dd;
    border-radius: 10px;
}

.font-name {
    width: 224px;
    padding: 0 12px 2px;
    justify-content: flex-start;
    font-size: 23px;
}

.font-size {
    display: flex;
    width: 163px;
    margin: 0 3px 0 6px;
}

.font-size button {
    width: 50px;
}

.font-size input {
    flex: 1;
    min-width: 0;
    padding-bottom: 2px;
    text-align: center;
}

.tool {
    width: 56px;
    height: 50px;
}

.off {
    color: #a5abb0;
}

.off b {
    font-size: 28px;
}

.color-a {
    width: 34px;
    padding-bottom: 7px;
    font-size: 30px;
    line-height: 30px;
    background: linear-gradient(90deg, #f3461f, #ffd500 30%, #56f000 50%, #00d5ff 75%, #1446ff) bottom / 34px 7px no-repeat;
    border-radius: 0 0 4px 4px;
}

.tool-line {
    width: 2px;
    height: 25px;
    margin: 0 9px;
    background: #dfe3e8;
}

.effects {
    height: 50px;
    padding: 0 16px 3px;
    font-size: 23px;
}

.slide {
    position: relative;
    width: 778px;
    height: 438px;
    margin-top: 25px;
    background: #fff;
    box-shadow: 0 8px 40px rgba(64, 79, 109, .1);
}

.slide-text {
    position: absolute;
    font-size: 64px;
    font-weight: 900;
    white-space: nowrap;
    line-height: 84px;
    color: #000;
}

.title-text {
    top: 148px;
    left: 163px;
}

.selected-text {
    top: 241px;
    left: 442px;
    width: 294px;
    height: 87px;
    font-size: 60px;
    color: #fff;
    text-align: center;
    background: #3267d3;
    border: solid #8b3dff;
    border-width: 0 2px;
}

.selected-text::before {
    content: '';
    position: absolute;
    inset: 5px 0;
    border: solid #1f3fd0;
    border-width: 3px 0;
}

.knob,
.grip {
    position: absolute;
    background: #fff;
    border: 1px solid #a9adb5;
    box-shadow: 0 0 4px rgba(64, 79, 109, .3);
}

.knob {
    width: 20px;
    height: 20px;
    border-radius: 50%;
}

.grip {
    top: 28px;
    width: 12px;
    height: 30px;
    border-radius: 6px;
}

.tl, .tr { top: -4px; }
.bl, .br { bottom: -3px; }
.tl, .bl { left: -11px; }
.tr, .br { right: -11px; }
.left { left: -7px; }
.right { right: -7px; }

.context-bar {
    position: absolute;
    top: 153px;
    left: 460px;
    display: flex;
    align-items: center;
    height: 57px;
    padding: 0 3px;
    border-radius: 29px;
    background: #fff;
    box-shadow: 0 8px 32px rgba(64, 79, 109, .2), 0 0 2px rgba(64, 79, 109, .2);
}

.context-bar button {
    width: 50px;
}

.transform-btns {
    position: absolute;
    top: 373px;
    left: 541px;
    display: flex;
    gap: 16px;
}

.transform-btns button {
    width: 40px;
    height: 40px;
    border: 2px solid #bcc0c6;
    border-radius: 50%;
    background: #fff;
}

.pages {
    display: flex;
    align-items: center;
    gap: 19px;
    margin-top: 51px;
    padding-left: 7px;
}

.page-thumb {
    position: relative;
    width: 178px;
    height: 107px;
    border: 3px solid #858c95;
    border-radius: 14px;
    background: #fff;
    color: #000;
}

.page-thumb::before {
    content: '';
    position: absolute;
    inset: 3px;
    border: 2px solid #dadde5;
    border-radius: 10px;
}

.mini {
    position: absolute;
    font-size: 14px;
    font-weight: 900;
    line-height: 16px;
}

.first {
    top: 37px;
    left: 34px;
}

.second {
    top: 58px;
    right: 8px;
}

.page-no {
    position: absolute;
    left: 16px;
    bottom: 10px;
    font-size: 18px;
    font-weight: 600;
    line-height: 20px;
}

.add-page {
    width: 178px;
    height: 100px;
    border-radius: 12px;
    background: #e4e5ea;
}

.editor-footer {
    display: flex;
    align-items: center;
    align-self: stretch;
    height: 62px;
    margin-top: auto;
    padding: 0 21px 2px 24px;
    gap: 34px;
    font-weight: 500;
}

.editor-footer button {
    gap: 10px;
}

.footer-right {
    display: flex;
    align-items: center;
    gap: 36px;
    margin-left: auto;
    font-size: 22px;
}

.page-count {
    margin-right: 18px;
}

.zoom-level {
    margin-right: 16px;
}

/* Taskbar */
.taskbar {
    display: flex;
    align-items: center;
    justify-content: space-between;
    height: 60px;
    padding: 0 24px 2px;
    background: #202020;
    border-top: 1px solid #3d3d3d;
    color: #fff;
    font-size: 15px;
    line-height: 19px;
}

.weather {
    display: flex;
    align-items: center;
    gap: 9px;
    width: 560px;
}

.weather-icon {
    position: relative;
    height: 30px;
}

.badge {
    position: absolute;
    top: -9px;
    right: -3px;
    width: 20px;
    height: 20px;
    border-radius: 50%;
    background: #c62b21;
    text-align: center;
    font-size: 14px;
}

.muted {
    color: #c0c0c0;
    font-size: 16px;
}

.task-center {
    display: flex;
    align-items: center;
    flex: 1;
}

.task-search {
    display: flex;
    align-items: center;
    width: 273px;
    height: 38px;
    margin: 0 3px 0 18px;
    padding: 0 2px 0 13px;
    gap: 12px;
    border-radius: 19px;
    background: #f3f3f3;
    color: #333;
    overflow: hidden;
}

.task-search input {
    flex: 1;
    min-width: 0;
    font-size: 18px;
}

.task-search input::placeholder {
    color: #666;
}

.app {
    position: relative;
    width: 55px;
    height: 49px;
}

.running {
    border-radius: 6px;
    background: #303030;
    background-clip: padding-box;
    border: solid transparent;
    border-width: 0 3px;
}

.running::after {
    content: '';
    position: absolute;
    bottom: 0;
    width: 20px;
    height: 4px;
    border-radius: 2px;
    background: #ff4fa3;
}

.chrome-user {
    position: absolute;
    top: 4px;
    right: 4px;
    width: 20px;
    height: 20px;
    border-radius: 50%;
    background: #4f2da8;
    font-size: 8px;
    line-height: 19px;
}

.hwp,
.kakao {
    display: flex;
    align-items: center;
    justify-content: center;
    width: 24px;
    height: 28px;
    border-radius: 8px 2px;
    background: #1e93d6;
    font-size: 16px;
    font-weight: 700;
}

.kakao {
    width: 30px;
    height: 30px;
    border-radius: 3px;
    background: #fae100;
    color: #fae100;
    font-size: 8px;
}

.kakao span {
    width: 24px;
    height: 20px;
    border-radius: 50%;
    background: #3a1d1d;
    line-height: 20px;
}

.tray {
    display: flex;
    align-items: center;
}

.update {
    margin: 0 20px 0 22px;
}

.ime {
    width: 48px;
    font-size: 20px;
}

.status {
    display: flex;
    gap: 10px;
    margin-right: 20px;
}

.clock {
    margin-right: 12px;
    text-align: right;
}
```
